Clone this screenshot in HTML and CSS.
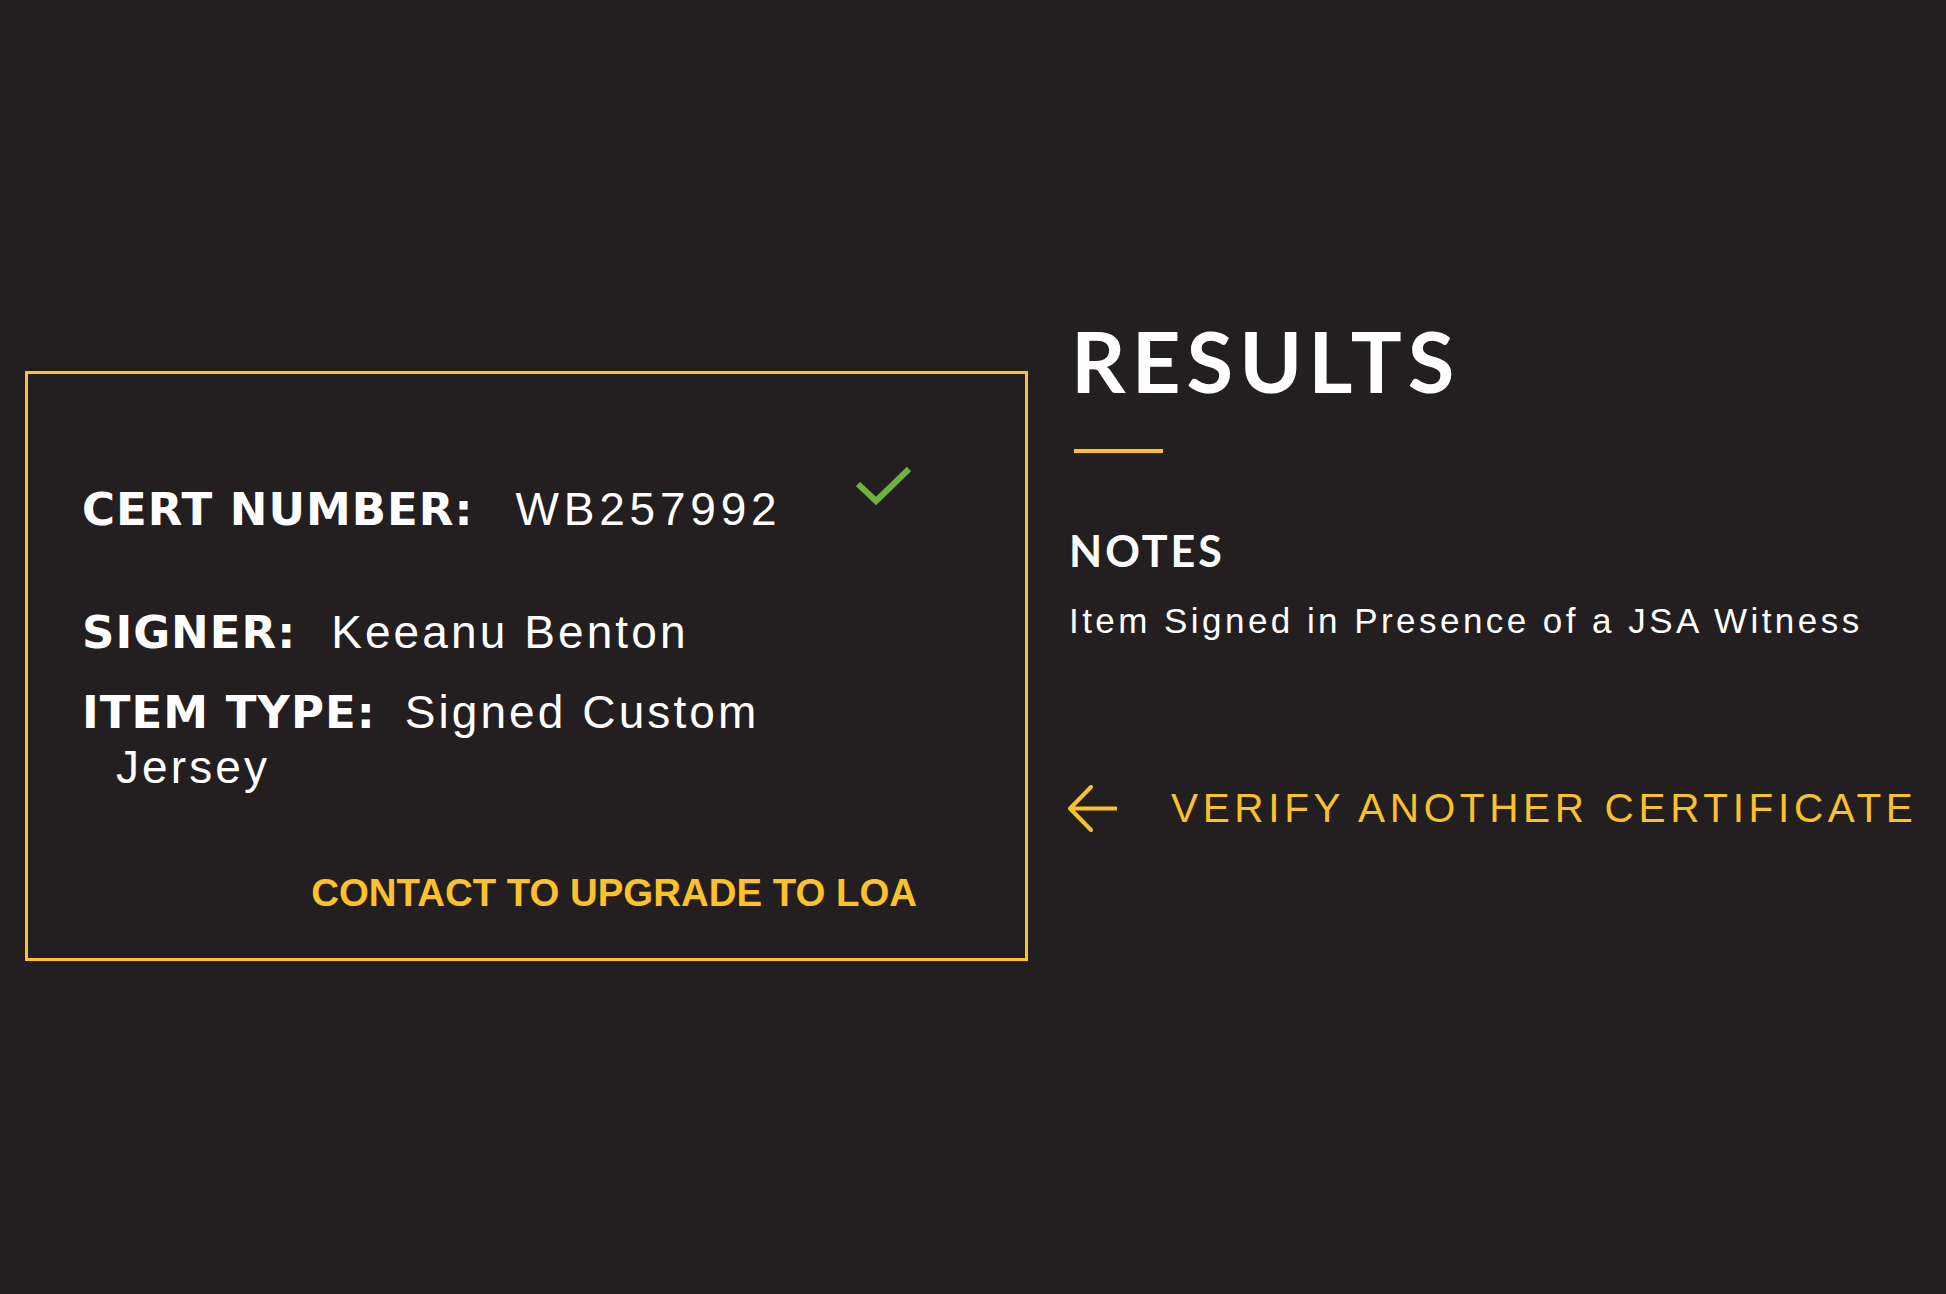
FILE: index.html
```html
<!DOCTYPE html>
<html lang="en">

<head>
  <meta charset="UTF-8" />
  <meta name="viewport" content="width=device-width, initial-scale=1.0" />
  <title>Certificate Results</title>
  <link rel="stylesheet" href="styles.css">
</head>

<body>
  <div class="page">

    <div class="card">
      <div class="cert-row">
        <div class="line">
          <span class="label">CERT NUMBER:</span><span class="value num">WB257992</span>
        </div>
        <svg class="check" width="56" height="40" viewBox="0 0 56 40">
          <polyline points="2,18 20,35 53,3" fill="none" stroke="#6cb33f" stroke-width="6" />
        </svg>
      </div>
      <div class="line">
        <span class="label">SIGNER:</span><span class="value">Keeanu Benton</span>
      </div>
      <div class="line hang">
        <span class="label">ITEM TYPE:</span><span class="value">Signed Custom<br>Jersey</span>
      </div>
      <div class="upgrade">CONTACT TO UPGRADE TO LOA</div>
    </div>

    <div class="results">
      <h1 class="title">RESULTS</h1>
      <div class="rule"></div>
      <h2 class="notes-title">NOTES</h2>
      <p class="notes">Item Signed in Presence of a JSA Witness</p>
      <a class="back" href="#">
        <svg width="50" height="47" viewBox="0 0 50 47">
          <path d="M24 2 L3 23.5 L24 45 M3 23.5 H49" fill="none" stroke="#f9c12a" stroke-width="4" stroke-linecap="round" stroke-linejoin="round" />
        </svg>
        <span>VERIFY ANOTHER CERTIFICATE</span>
      </a>
    </div>

  </div>
</body>

</html>
```

FILE: styles.css
```css
html {
  background: #231f20;
}

body {
  margin: 0;
  color: #fff;
  font-family: "Liberation Sans", Arial, sans-serif;
}

.page {
  display: flex;
  align-items: flex-start;
  padding: 309px 0 0 25px;
}

.card {
  box-sizing: border-box;
  width: 1003px;
  height: 590px;
  margin-top: 62px;
  padding: 108px 108px 0 54px;
  border: 3px solid #fdc22a;
}

.line {
  font-family: "DejaVu Sans", sans-serif;
  font-size: 45px;
  line-height: 55px;
  margin-bottom: 25px;
}

.label {
  font-weight: 700;
  letter-spacing: 1px;
  margin-right: 35px;
}

.value {
  font-family: "Liberation Sans", Arial, sans-serif;
  font-size: 46px;
  letter-spacing: 3.1px;
}

.value.num {
  margin-left: 7px;
  letter-spacing: 4.8px;
}

.hang .value {
  margin-left: -6px;
}

.cert-row {
  display: flex;
  justify-content: space-between;
  align-items: flex-start;
  margin-bottom: 68px;
}

.cert-row .line {
  margin-bottom: 0;
}

.check {
  display: block;
  margin-top: -16px;
  margin-right: 5px;
}

.hang {
  padding-left: 34px;
  text-indent: -34px;
  line-height: 54px;
}

.upgrade {
  margin-top: 75px;
  text-align: right;
  color: #fdc22a;
  font-weight: 700;
  font-size: 38.4px;
  line-height: 46px;
}

.results {
  margin-left: 41px;
}

.title {
  margin: 0;
  padding-left: 2px;
  font-family: Lato, sans-serif;
  font-weight: 700;
  font-size: 85px;
  line-height: 102px;
  letter-spacing: 6px;
}

.rule {
  width: 89px;
  height: 4px;
  margin: 38px 0 0 5px;
  background: #fdc22a;
}

.notes-title {
  margin: 72px 0 0;
  font-family: Lato, sans-serif;
  font-weight: 700;
  font-size: 43px;
  line-height: 52px;
  letter-spacing: 3px;
}

.notes {
  margin: 23px 0 0;
  font-size: 35px;
  line-height: 42px;
  letter-spacing: 3.45px;
}

.back {
  display: flex;
  align-items: center;
  gap: 54px;
  margin-top: 142px;
  color: #f9c12a;
  text-decoration: none;
  font-size: 40.5px;
  line-height: 49px;
  letter-spacing: 4.65px;
}

.back svg {
  display: block;
  flex-shrink: 0;
  margin-left: -2px;
}
```
